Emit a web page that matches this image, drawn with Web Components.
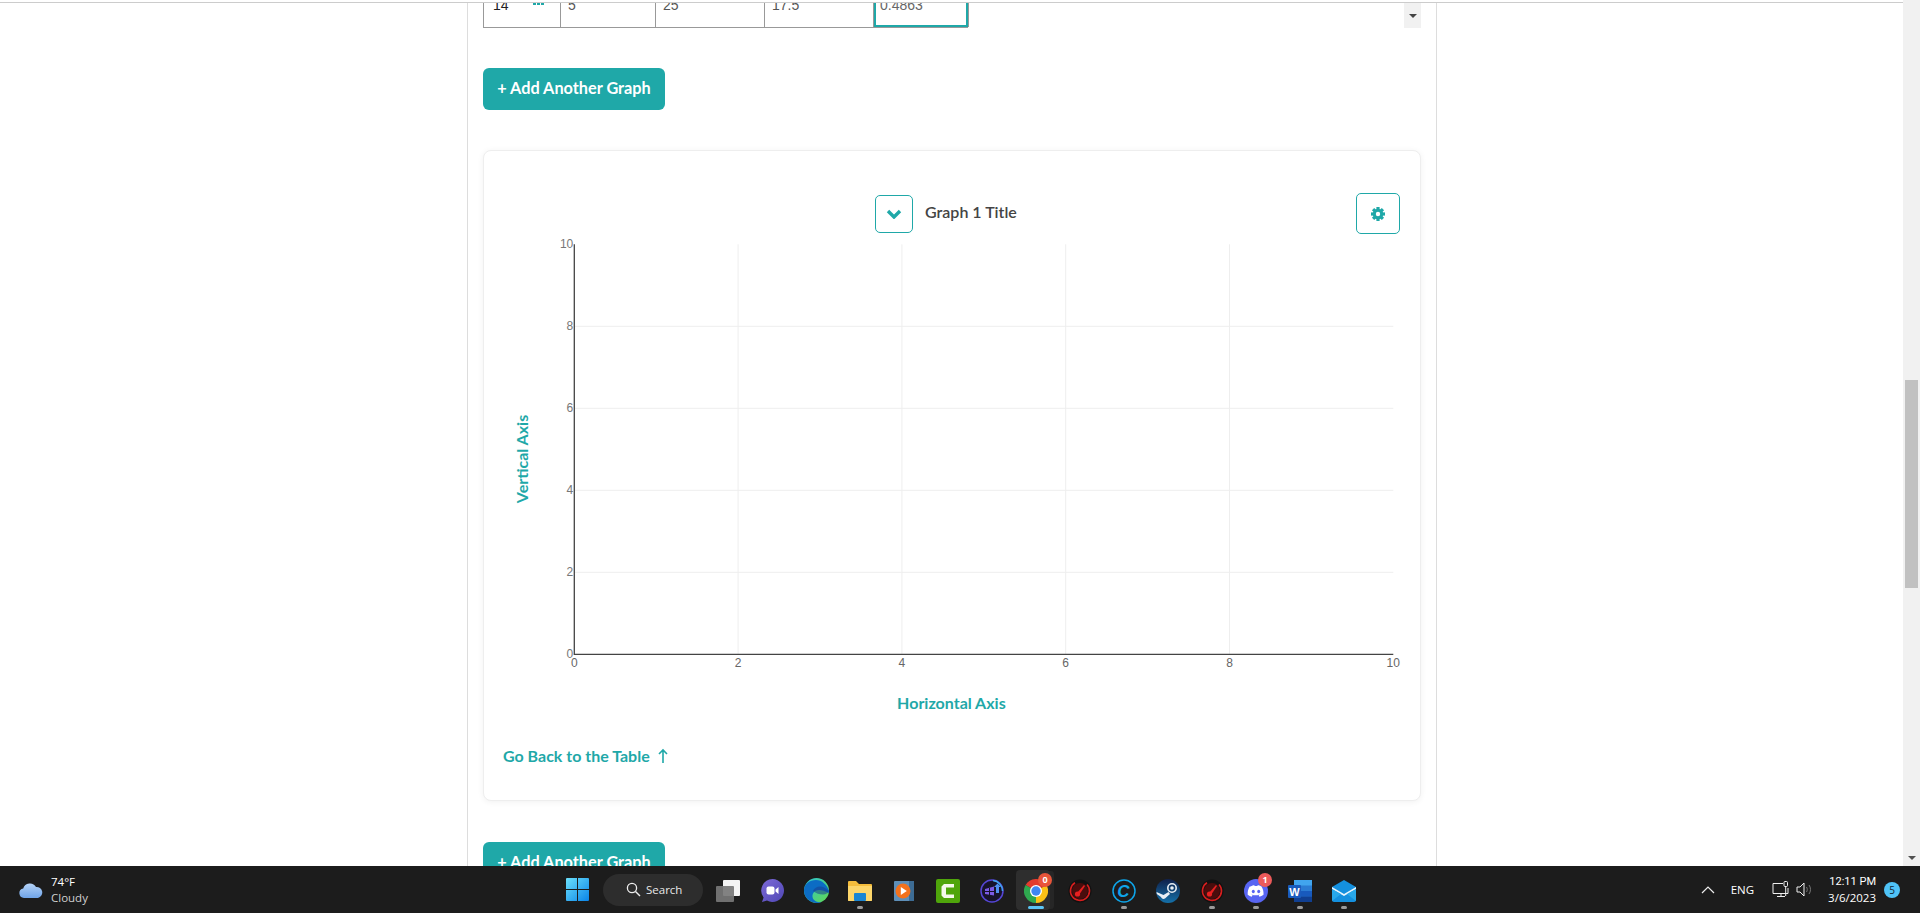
<!DOCTYPE html>
<html lang="en">
<head>
<meta charset="utf-8">
<title>Graph</title>
<style>
  html, body { margin: 0; height: 100%; background: #fff; overflow: hidden; }
  body { font-family: Lato, "Liberation Sans", sans-serif; }
</style>
</head>
<body>
<app-screen>
  <page-column>
    <table-row></table-row>
    <teal-button style="margin-top:40px">+ Add Another Graph</teal-button>
    <graph-card title-text="Graph 1 Title"></graph-card>
    <teal-button style="margin-top:41px">+ Add Another Graph</teal-button>
  </page-column>
  <scroll-rail slot="rail"></scroll-rail>
  <task-bar slot="bar"></task-bar>
</app-screen>

<script>
const TEAL = '#1fa8a8'

class AppScreen extends HTMLElement {
  constructor() {
    super()
    this.attachShadow({ mode: 'open' })
    this.shadowRoot.innerHTML = `<style>
      :host { display: grid; grid-template-rows: 866px 47px; height: 913px; width: 1920px; overflow: hidden; }
      .top { display: flex; min-height: 0; }
      .page { flex: 1; overflow: hidden; padding-top: 2px; }
      .line { height: 1px; background: #ccc; }
    </style>
    <div class="top">
      <div class="page"><div class="line"></div><slot></slot></div>
      <slot name="rail"></slot>
    </div>
    <slot name="bar"></slot>`
  }
}

class PageColumn extends HTMLElement {
  constructor() {
    super()
    this.attachShadow({ mode: 'open' })
    this.shadowRoot.innerHTML = `<style>
      :host {
        display: block; box-sizing: border-box; width: 970px; margin-left: 467px; height: 900px;
        padding-left: 15px; border-left: 1px solid #ddd; border-right: 1px solid #ddd;
      }
    </style><slot></slot>`
  }
}

class TableRow extends HTMLElement {
  constructor() {
    super()
    this.attachShadow({ mode: 'open' })
    this.shadowRoot.innerHTML = `<style>
      :host { display: flex; justify-content: space-between; width: 938px; height: 25px; }
      .table {
        display: grid; grid-template-columns: 77px 95px 109px 109px 95px; width: 485px;
        box-sizing: border-box; height: 25px; border-left: 1px solid #999; border-bottom: 1px solid #999;
        font: 14px/16px "Liberation Sans", sans-serif; color: #555;
      }
      .cell { position: relative; overflow: hidden; border-right: 1px solid #999; padding-left: 7px; }
      .cell span { display: block; margin-top: -6px; }
      .first { padding-left: 9px; color: #222; }
      .dots { position: absolute; left: 49px; top: 0; display: flex; gap: 1px; }
      .dots i { width: 3px; height: 2px; background: ${TEAL}; }
      .sel { border-right: 1px solid #999; box-shadow: inset 2px 0 ${TEAL}, inset -2px 0 ${TEAL}, inset 0 -2px ${TEAL}; padding-left: 6px; color: #666; }
      .arrow { width: 17px; height: 25px; background: #f1f1f1; display: flex; align-items: center; justify-content: center; }
      .arrow b { border: 4px solid transparent; border-top: 4px solid #444; border-bottom: 0; width: 0; height: 0; }
    </style>
    <div class="table">
      <div class="cell first"><span>14</span><div class="dots"><i></i><i></i><i></i></div></div>
      <div class="cell"><span>5</span></div>
      <div class="cell"><span>25</span></div>
      <div class="cell"><span>17.5</span></div>
      <div class="cell sel"><span>0.4863</span></div>
    </div>
    <div class="arrow"><b></b></div>`
  }
}

class TealButton extends HTMLElement {
  constructor() {
    super()
    this.attachShadow({ mode: 'open' })
    this.shadowRoot.innerHTML = `<style>
      :host {
        display: flex; align-items: center; justify-content: center; box-sizing: border-box;
        width: 182px; height: 42px; padding-bottom: 3px; border-radius: 6px; background: ${TEAL}; color: #fff;
        font: 700 16.3px Lato, sans-serif; white-space: nowrap;
      }
    </style><slot></slot>`
  }
}

class GraphPlot extends HTMLElement {
  constructor() {
    super()
    this.attachShadow({ mode: 'open' })
    const ox = 574.3, oy = 654.3, sx = 81.9, sy = 41
    let grid = '', ticks = ''
    for (let v = 0; v <= 10; v += 2) {
      const x = ox + v * sx, y = oy - v * sy
      if (v > 0 && v < 10) {
        grid += `<line x1="${x}" y1="${oy - 10 * sy}" x2="${x}" y2="${oy}"/>`
        grid += `<line x1="${ox}" y1="${y}" x2="${ox + 10 * sx}" y2="${y}"/>`
      }
      ticks += `<text x="${ox - 1}" y="${y + 4}" text-anchor="end" fill="#777">${v}</text>`
      ticks += `<text x="${x}" y="${oy + 12.5}" text-anchor="middle" fill="#666">${v}</text>`
    }
    this.shadowRoot.innerHTML = `<style>
      :host { display: block; height: 510px; }
      svg { display: block; }
      .grid line { stroke: #eee; stroke-width: 1; }
      .ticks text { font: 12px "Liberation Sans", sans-serif; }
      .axis { font: 700 16px Lato, sans-serif; fill: ${TEAL}; text-anchor: middle; }
    </style>
    <svg width="936" height="510" viewBox="484 234 936 510">
      <g class="grid">${grid}</g>
      <path d="M${ox} ${oy - 10 * sy}V${oy}H${ox + 10 * sx}" fill="none" stroke="#444" stroke-width="1.3"/>
      <g class="ticks">${ticks}</g>
      <text class="axis" transform="translate(528 459) rotate(-90)">Vertical Axis</text>
      <text class="axis" x="951.4" y="709">Horizontal Axis</text>
    </svg>`
  }
}

class GraphCard extends HTMLElement {
  constructor() {
    super()
    this.attachShadow({ mode: 'open' })
    const title = this.getAttribute('title-text') || ''
    let teeth = ''
    for (let a = 0; a < 360; a += 45) teeth += `<rect x="-1.6" y="-7" width="3.2" height="3" transform="rotate(${a})"/>`
    this.shadowRoot.innerHTML = `<style>
      :host {
        display: block; box-sizing: border-box; width: 938px; height: 651px; margin-top: 40px;
        border: 1px solid #eee; border-radius: 8px; background: #fff; box-shadow: 0 1px 6px rgba(0,0,0,.06);
        padding-top: 42px;
      }
      .head { display: flex; align-items: center; height: 41px; padding: 0 20px 0 391px; }
      .btn {
        box-sizing: border-box; display: flex; align-items: center; justify-content: center;
        border: 1px solid ${TEAL}; border-radius: 5px;
      }
      .drop { width: 38px; height: 38px; }
      .gear { width: 44px; height: 41px; margin-left: auto; }
      .title { margin: 0 0 5px 12px; font: 600 16px Lato, sans-serif; color: #444; }
      .back { display: flex; align-items: center; gap: 7px; padding-left: 19px; height: 24px; font: 700 16px/24px Lato, sans-serif; color: ${TEAL}; }
    </style>
    <div class="head">
      <div class="btn drop"><svg width="16" height="10" viewBox="0 0 16 10"><path d="M2 2l6 6 6-6" fill="none" stroke="${TEAL}" stroke-width="3.4"/></svg></div>
      <span class="title">${title}</span>
      <div class="btn gear"><svg width="16" height="16" viewBox="-8 -8 16 16"><g fill="${TEAL}">${teeth}</g><circle r="3.7" fill="none" stroke="${TEAL}" stroke-width="3"/></svg></div>
    </div>
    <graph-plot></graph-plot>
    <div class="back"><span>Go Back to the Table</span><svg width="12" height="16" viewBox="0 0 12 16"><path d="M6 15V2M2 6l4-4 4 4" fill="none" stroke="${TEAL}" stroke-width="1.6"/></svg></div>`
  }
}

class ScrollRail extends HTMLElement {
  constructor() {
    super()
    this.attachShadow({ mode: 'open' })
    this.shadowRoot.innerHTML = `<style>
      :host { display: flex; flex-direction: column; align-items: center; width: 17px; background: #f1f1f1; }
      .thumb { width: 13px; height: 208px; margin-top: 380px; background: #c1c1c1; }
      .arrow { margin-top: auto; margin-bottom: 6px; width: 0; height: 0; border: 4px solid transparent; border-top-color: #505050; border-bottom: 0; }
    </style><div class="thumb"></div><div class="arrow"></div>`
  }
}

class TaskIcon extends HTMLElement {
  constructor() {
    super()
    this.attachShadow({ mode: 'open' })
    const badge = this.getAttribute('badge')
    const color = this.getAttribute('badge-color') || '#e8553a'
    this.shadowRoot.innerHTML = `<style>
      :host { position: relative; display: flex; align-items: center; justify-content: center; width: 44px; height: 47px; padding-top: 2px; box-sizing: border-box; }
      :host([active])::before {
        content: ""; position: absolute; left: 2px; top: 4px; width: 34px; height: 40px;
        background: #2e2e2e; border-radius: 4px; box-shadow: 5px 0 0 -1px #262626;
      }
      ::slotted(svg) { position: relative; display: block; }
      .mark { position: absolute; left: 19px; bottom: 4px; width: 6px; height: 3px; border-radius: 2px; background: #9a9a9a; display: none; }
      :host([open]) .mark { display: block; }
      :host([active]) .mark { display: block; left: 14px; width: 16px; background: #5cc5f5; }
      .badge {
        position: absolute; left: 24px; top: 7px; width: 14px; height: 14px; border-radius: 50%;
        background: ${color}; color: #fff; font: 700 9px/14px "Open Sans", sans-serif; text-align: center;
      }
    </style><slot></slot><div class="mark"></div>${badge !== null ? `<div class="badge">${badge}</div>` : ''}`
  }
}

const GAUGE = `<svg width="24" height="24" viewBox="0 0 24 24"><circle cx="12" cy="12" r="11.5" fill="#111"/><path d="M19 5.5A9.5 9.5 0 1 1 7 3.8" fill="none" stroke="#d81e1e" stroke-width="1.6"/><circle cx="12" cy="12" r="8" fill="#4a0d0d"/><circle cx="9.5" cy="15" r="2.6" fill="#e82020"/><path d="M9 14l7-8 1 1-6 9z" fill="#e82020"/></svg>`

class TaskBar extends HTMLElement {
  constructor() {
    super()
    this.attachShadow({ mode: 'open' })
    this.shadowRoot.innerHTML = `<style>
      :host {
        display: flex; align-items: center; height: 47px; background: #1c1c1c; color: #fff;
        font-family: "Open Sans", "Noto Sans", sans-serif; position: relative;
      }
      .weather { display: flex; align-items: center; gap: 8px; width: 566px; padding-left: 19px; box-sizing: border-box; flex: none; }
      .weather div { font-size: 11.5px; line-height: 16px; }
      .weather small { display: block; font-size: 11.5px; color: #d0d0d0; }
      .win { flex: none; display: block; }
      .search {
        flex: none; display: flex; align-items: center; gap: 5px; box-sizing: border-box; width: 100px; height: 32px;
        margin-left: 14px; margin-right: 3px; padding-left: 23px; border-radius: 16px; background: #2d2d2d; font-size: 11.5px; color: #e8e8e8;
      }
      .tray { margin-left: auto; display: flex; align-items: center; font-size: 11.5px; }
      .eng { margin: 0 18px 0 16px; }
      .clock { margin: 0 8px 0 15px; text-align: right; line-height: 16px; font-size: 11.5px; }
      .clock b { font: 11px/16px Roboto, sans-serif; display: block; }
      .count { width: 16px; height: 16px; border-radius: 50%; background: #4fc3f7; color: #123; font-size: 10px; line-height: 16px; text-align: center; margin-right: 20px; }
    </style>
    <div class="weather">
      <svg width="24" height="16" viewBox="0 0 24 16"><defs><linearGradient id="c" x1="0" y1="0" x2="0" y2="1"><stop offset="0" stop-color="#b5d3f7"/><stop offset="1" stop-color="#6fa4e8"/></linearGradient></defs><path d="M5 16a4.8 4.8 0 0 1-.8-9.5A7 7 0 0 1 17 5a5.6 5.6 0 0 1 2 11z" fill="url(#c)"/></svg>
      <div>74°F<small>Cloudy</small></div>
    </div>
    <svg class="win" width="23" height="23" viewBox="0 0 23 23"><defs><linearGradient id="w" x1="0" y1="0" x2="1" y2="1"><stop offset="0" stop-color="#6be0fb"/><stop offset="1" stop-color="#0a84e8"/></linearGradient></defs><path d="M0 1a1 1 0 0 1 1-1h10v11H0zM12 0h10a1 1 0 0 1 1 1v10H12zM0 12h11v11H1a1 1 0 0 1-1-1zM12 12h11v10a1 1 0 0 1-1 1H12z" fill="url(#w)"/></svg>
    <div class="search"><svg width="15" height="15" viewBox="0 0 15 15"><circle cx="6" cy="6" r="4.6" fill="none" stroke="#eee" stroke-width="1.3"/><path d="M9.5 9.5L14 14" stroke="#eee" stroke-width="1.4"/></svg><span>Search</span></div>
    <task-icon><svg width="24" height="22" viewBox="0 0 24 22"><rect x="7" y="0" width="17" height="16" rx="1" fill="#f4f4f4"/><rect x="0" y="6" width="18" height="16" rx="1" fill="#777" fill-opacity=".92"/></svg></task-icon>
    <task-icon><svg width="23" height="23" viewBox="0 0 23 23"><defs><linearGradient id="m" x1="0" y1="0" x2="1" y2="1"><stop offset="0" stop-color="#7d6ad8"/><stop offset="1" stop-color="#4f47b5"/></linearGradient></defs><path d="M11.5 0a11.5 11.5 0 1 1-5.5 21.6L1 23l1.6-4.6A11.5 11.5 0 0 1 11.5 0z" fill="url(#m)"/><rect x="5.5" y="7.5" width="8" height="8" rx="2" fill="#fff"/><path d="M14.5 10.5l3-2.5v7l-3-2.5z" fill="#fff"/></svg></task-icon>
    <task-icon><svg width="25" height="25" viewBox="0 0 25 25"><defs><linearGradient id="e1" x1="0" y1="0" x2="1" y2="1"><stop offset="0" stop-color="#2bc4d8"/><stop offset="1" stop-color="#62d84e"/></linearGradient></defs><circle cx="12.5" cy="12.5" r="12.5" fill="url(#e1)"/><path d="M0 12.5A12.5 12.5 0 0 0 18 23.7c-5 1-9-1-9.500-5-.4-3.400 2.500-6.700 6.500-6.700 3 0 5.500 1 10 3 .2-1 0-2 0-2.500C23 7 18 2 12 2 6 2 0 6 0 12.500z" fill="#0c6cc4"/><path d="M9 13c1-3 4-4.500 7-4.500 3.500 0 6 2 9 4.500-1 2-3 3.500-6 3.500-3.500 0-7-1-10-3.500z" fill="#1a3f8f" opacity=".55"/></svg></task-icon>
    <task-icon open><svg width="24" height="21" viewBox="0 0 24 21"><path d="M0 2a1 1 0 0 1 1-1h7l3 3h12a1 1 0 0 1 1 1v15a1 1 0 0 1-1 1H1a1 1 0 0 1-1-1z" fill="#f5bd3c"/><path d="M0 6h24v14a1 1 0 0 1-1 1H1a1 1 0 0 1-1-1z" fill="#fdd66a"/><rect x="6" y="13" width="12" height="8" rx="1" fill="#1a86d4"/></svg></task-icon>
    <task-icon><svg width="20" height="20" viewBox="0 0 20 20"><rect width="20" height="20" rx="1" fill="#5e8fb8"/><rect x="15" width="5" height="20" fill="#3d6c94"/><circle cx="9" cy="10" r="7.500" fill="#f2711c"/><path d="M6.800 6l6 4-6 4z" fill="#fff"/></svg></task-icon>
    <task-icon><svg width="24" height="24" viewBox="0 0 24 24"><rect width="24" height="24" rx="2" fill="#4fa50b"/><path d="M18 5H8L5.500 7.500v9L8 19h10v-3.500H10v-7h8z" fill="#f4f8ec"/></svg></task-icon>
    <task-icon><svg width="24" height="24" viewBox="0 0 24 24"><circle cx="12" cy="12" r="11" fill="#17132c" stroke="#5546d6" stroke-width="1.500"/><path d="M13 1.500A10.500 10.500 0 0 1 22.500 12" fill="none" stroke="#3fa8f0" stroke-width="1.500"/><path d="M5 10l9-2.500v9L5 15z" fill="#7b5be8"/><path d="M9.500 9v7M5 12.500h9" stroke="#17132c"/><path d="M16 14V8h-2l3.500-3.500L21 8h-2v6z" fill="#4f8ff0"/></svg></task-icon>
    <task-icon active badge="0"><svg width="24" height="24" viewBox="0 0 24 24"><path d="M12 12L1.600 6A12 12 0 0 1 22.400 6z" fill="#e33b2e"/><path d="M12 12L22.400 6A12 12 0 0 1 12 24z" fill="#fbc116"/><path d="M12 12L12 24A12 12 0 0 1 1.600 6z" fill="#2fa84f"/><circle cx="12" cy="12" r="6" fill="#fff"/><circle cx="12" cy="12" r="4.700" fill="#3f86f4"/></svg></task-icon>
    <task-icon>${GAUGE}</task-icon>
    <task-icon open><svg width="24" height="24" viewBox="0 0 24 24"><circle cx="12" cy="12" r="11" fill="none" stroke="#0ea5e9" stroke-width="1.500"/><text x="11.500" y="18" text-anchor="middle" font-family="Liberation Sans" font-style="italic" font-weight="700" font-size="17" fill="#0ea5e9">C</text></svg></task-icon>
    <task-icon><svg width="24" height="24" viewBox="0 0 24 24"><defs><linearGradient id="s" x1="0" y1="0" x2="0" y2="1"><stop offset="0" stop-color="#10204a"/><stop offset="1" stop-color="#1470a8"/></linearGradient></defs><circle cx="12" cy="12" r="12" fill="url(#s)"/><circle cx="16" cy="9" r="4.200" fill="none" stroke="#e8eef4" stroke-width="1.600"/><circle cx="16" cy="9" r="1.800" fill="#e8eef4"/><path d="M0.500 13l7 3 5-3 1.500 2-5 4.500c-2 1-3.500 0-4-1.500L0.800 15z" fill="#e8eef4"/></svg></task-icon>
    <task-icon open>${GAUGE}</task-icon>
    <task-icon open badge="1" badge-color="#ec5a5a"><svg width="24" height="24" viewBox="0 0 24 24"><circle cx="12" cy="12" r="12" fill="#5865f2"/><path d="M6.500 7.500c1.500-.8 3-1.200 3.800-1.200l.4.800c1-.2 1.800-.2 2.600 0l.4-.8c.8 0 2.300.4 3.800 1.200 1.600 2.700 2.300 5.400 2 8.300-1.300 1-2.700 1.600-4 1.900l-.9-1.400 1.300-.7-.3-.2c-2.600 1.200-5.400 1.200-8 0l-.3.200 1.300.7-.9 1.400c-1.300-.3-2.700-.9-4-1.900-.3-2.900.4-5.600 2-8.300z" fill="#fff"/><ellipse cx="9.300" cy="12.500" rx="1.500" ry="1.700" fill="#5865f2"/><ellipse cx="14.700" cy="12.500" rx="1.500" ry="1.700" fill="#5865f2"/></svg></task-icon>
    <task-icon open><svg width="24" height="24" viewBox="0 0 24 24"><rect x="6" y="1" width="18" height="22" rx="1" fill="#2b7cd3"/><rect x="6" y="1" width="18" height="5.500" fill="#41a5ee"/><rect x="6" y="12" width="18" height="5.500" fill="#185abd"/><rect x="6" y="17.500" width="18" height="5.500" fill="#103f91"/><rect x="0" y="6" width="13" height="13" rx="1" fill="#1a5cbd"/><text x="6.500" y="16.500" text-anchor="middle" font-family="Liberation Sans" font-weight="700" font-size="11" fill="#fff">W</text></svg></task-icon>
    <task-icon open><svg width="24" height="22" viewBox="0 0 24 22"><path d="M0 7L12 0l12 7v13a2 2 0 0 1-2 2H2a2 2 0 0 1-2-2z" fill="#1490df"/><path d="M0 7l12 7 12-7v2l-12 7L0 9z" fill="#e8f4fc"/><path d="M0 9l9 5-9 7zM24 9l-9 5 9 7z" fill="#28a8ea"/></svg></task-icon>
    <div class="tray">
      <svg width="14" height="8" viewBox="0 0 14 8"><path d="M1 7l6-6 6 6" fill="none" stroke="#eee" stroke-width="1.200"/></svg>
      <span class="eng">ENG</span>
      <svg width="17" height="17" viewBox="0 0 17 17" fill="none" stroke="#eee"><path d="M11 2.500H1v10h15V7M5 15.500h8M9 13v2"/><rect x="12" y="0.500" width="3.500" height="5" rx="1"/><path d="M13.700 5.500V15"/></svg>
      <svg style="margin-left:7px" width="17" height="15" viewBox="0 0 17 15" fill="none" stroke="#eee"><path d="M1 5h3l4-4v13l-4-4H1z"/><path d="M10.500 5c1 1.500 1 3.500 0 5M13 3c2 2.500 2 6.500 0 9" stroke="#777"/></svg>
      <div class="clock"><b>12:11 PM</b>3/6/2023</div>
      <div class="count">5</div>
    </div>`
  }
}

customElements.define('app-screen', AppScreen)
customElements.define('page-column', PageColumn)
customElements.define('table-row', TableRow)
customElements.define('teal-button', TealButton)
customElements.define('graph-plot', GraphPlot)
customElements.define('graph-card', GraphCard)
customElements.define('scroll-rail', ScrollRail)
customElements.define('task-icon', TaskIcon)
customElements.define('task-bar', TaskBar)
</script>
</body>
</html>
